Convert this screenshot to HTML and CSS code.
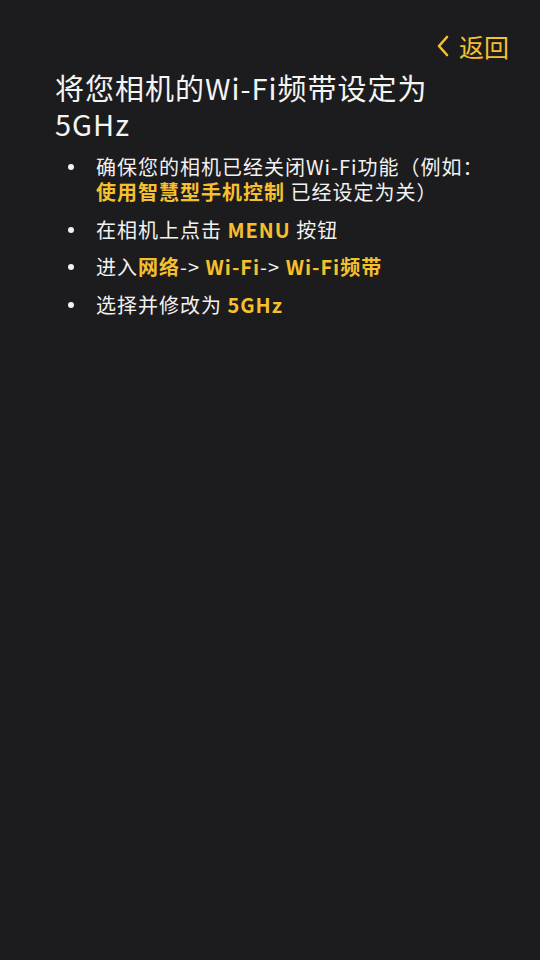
FILE: index.html
```html
<!DOCTYPE html>
<html lang="zh-CN">
<head>
    <meta charset="UTF-8">
    <meta name="viewport" content="width=device-width, initial-scale=1.0">
    <title>Wi-Fi频带</title>
    <link rel="stylesheet" href="styles.css">
</head>
<body>
    <div class="top-bar">
        <button class="back-button">
            <svg width="14" height="22" viewBox="0 0 14 22"><path d="M11 2 L3 11 L11 20" fill="none" stroke="#f5c02e" stroke-width="2.6" stroke-linecap="round" stroke-linejoin="round"/></svg>
            <span>返回</span>
        </button>
    </div>

    <h1>将您相机的Wi-Fi频带设定为5GHz</h1>

    <ul class="steps">
        <li>确保您的相机已经关闭Wi-Fi功能（例如：<b>使用智慧型手机控制</b> 已经设定为关）</li>
        <li>在相机上点击 <b>MENU</b> 按钮</li>
        <li>进入<b>网络</b>-&gt; <b>Wi-Fi</b>-&gt; <b>Wi-Fi频带</b></li>
        <li>选择并修改为 <b>5GHz</b></li>
    </ul>
</body>
</html>
```

FILE: styles.css
```css
body {
    margin: 0;
    width: 540px;
    height: 960px;
    background-color: #1c1c1e;
    color: #f2f2f2;
    font-family: "Noto Sans CJK SC", "Noto Sans", sans-serif;
}
.top-bar {
    display: flex;
    justify-content: flex-end;
    padding: 29px 31px 0 0;
}
.back-button {
    display: flex;
    align-items: center;
    gap: 9px;
    background: none;
    border: none;
    padding: 0;
    color: #f5c02e;
    font-family: inherit;
    font-size: 25px;
    line-height: 34px;
}
h1 {
    margin: 6px 0 0 55px;
    width: 410px;
    font-size: 29px;
    font-weight: 400;
    line-height: 36px;
    letter-spacing: 1px;
    color: #f4f4f4;
}
.steps {
    list-style: none;
    margin: 13px 40px 0 55px;
    padding: 0 0 0 41px;
    font-size: 20px;
    line-height: 25px;
    letter-spacing: 1px;
}
.steps li {
    position: relative;
    margin-bottom: 12.5px;
}
.steps li::before {
    content: "";
    position: absolute;
    left: -28px;
    top: 10px;
    width: 6px;
    height: 6px;
    border-radius: 50%;
    background: #f2f2f2;
}
.steps b {
    color: #f5c02e;
    font-weight: 700;
}
```
